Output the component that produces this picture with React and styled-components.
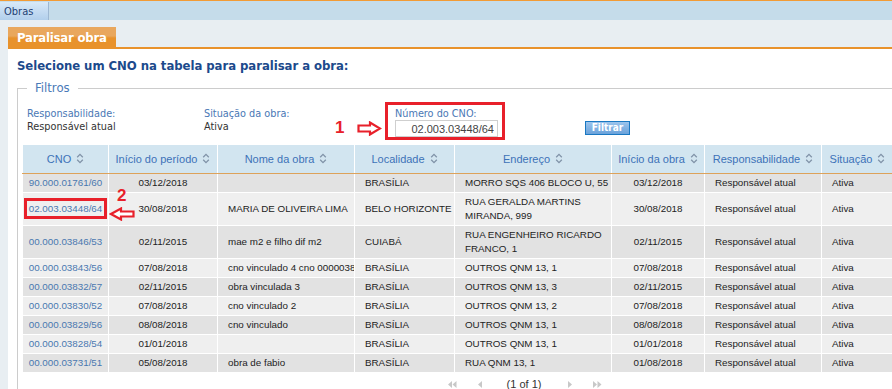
import React from "react";
import styled, { createGlobalStyle } from "styled-components";

const Global = createGlobalStyle`
  html, body { margin: 0; padding: 0; overflow: hidden; background: #e8eef2; }
  body { font-family: "Liberation Sans", Arial, sans-serif; }
`;

const Page = styled.div`
  width: 1060px;
  min-height: 389px;
  background: #e8eef2;
`;

const TopLine = styled.div`
  height: 1px;
  background: #f29b35;
`;

const MenuBar = styled.div`
  height: 19px;
  background: #c5dcea;
  display: flex;
  align-items: flex-end;
`;

const MenuTab = styled.div`
  height: 18px;
  width: 49px;
  box-sizing: border-box;
  padding: 0 0 0 4px;
  display: flex;
  align-items: center;
  background: linear-gradient(#d8e9f8, #b2cfec);
  border-right: 1px solid #9db7d2;
  color: #1f3f73;
  font: 11px "DejaVu Sans Condensed", Tahoma, sans-serif;
`;

const TabStrip = styled.div`
  padding: 7px 0 0 8px;
  display: flex;
`;

const TabTitle = styled.div`
  height: 20px;
  width: 108px;
  box-sizing: border-box;
  padding-left: 9px;
  display: flex;
  align-items: center;
  background: linear-gradient(#e9a75d 0%, #e9a75d 45%, #e8922c 55%, #e8922c 100%);
  color: #fff;
  font: bold 13px "DejaVu Sans Condensed", Tahoma, sans-serif;
  letter-spacing: -0.2px;
`;

const Content = styled.div`
  margin-left: 8px;
  background: #fff;
  border-top: 2px solid #e8922c;
  padding: 9px 0 0 9px;
  min-height: 340px;
`;

const Heading = styled.h1`
  margin: 0;
  font: bold 13px/16px "DejaVu Sans Condensed", Tahoma, sans-serif;
  color: #1c4a8c;
  letter-spacing: -0.05px;
`;

const Fieldset = styled.fieldset`
  margin: 6px 0 0 0;
  padding: 0 4px 0 4px;
  width: 1006px;
  border: 1px solid #cccccc;
  border-bottom: none;
`;

const Legend = styled.legend`
  margin-left: 5px;
  padding: 0 8px;
  color: #4a7ab8;
  font: 13px/16px "DejaVu Sans Condensed", Tahoma, sans-serif;
`;

const FilterRow = styled.div`
  display: flex;
  align-items: flex-start;
  padding: 6px 0 0 5px;
`;

const FilterGroup = styled.div`
  box-sizing: border-box;
  width: ${(p) => p.$w}px;
  padding-top: 5px;
  position: relative;
`;

const MarkedGroup = styled.div`
  box-sizing: border-box;
  width: 120px;
  border: 3px solid #e8202a;
  padding: 2px 4px 0 7px;
  position: relative;
`;

const FilterLabel = styled.div`
  font: 10.8px/13px "DejaVu Sans Condensed", Tahoma, sans-serif;
  color: #4a78b5;
`;

const FilterValue = styled.div`
  font: 10.8px/13px "DejaVu Sans Condensed", Tahoma, sans-serif;
  color: #333;
`;

const CnoInput = styled.input`
  display: block;
  box-sizing: border-box;
  width: 103px;
  height: 17px;
  margin: 0;
  padding: 0 3px;
  border: 1px solid #cfcfcf;
  text-align: right;
  color: #444;
  font: 11px "Liberation Sans", Arial, sans-serif;
`;

const FilterButton = styled.button`
  margin: 19px 0 0 80px;
  width: 45px;
  height: 14px;
  padding: 0;
  border: 1px solid #1a78c2;
  background: linear-gradient(#9cc4ec, #6aa2da);
  color: #fff;
  font: bold 10px/12px "DejaVu Sans Condensed", Tahoma, sans-serif;
`;

const Annot = styled.div`
  position: absolute;
  display: flex;
  align-items: center;
  color: #e8202a;
  font: bold 17px "Liberation Sans", Arial, sans-serif;
  ${(p) => p.$css}
`;

const Table = styled.table`
  margin-top: 5px;
  border-collapse: collapse;
  table-layout: fixed;
  width: 871px;
`;

const Th = styled.th`
  height: 28px;
  padding: 0 2px;
  background: #d2e5f0;
  border-left: 1px solid #fff;
  border-right: 1px solid #fff;
  border-bottom: 1px solid #dda25a;
  color: #3d72b8;
  font: normal 11px "Liberation Sans", Arial, sans-serif;
  white-space: nowrap;
  text-align: center;
`;

const SortIcon = () => (
  <svg width="8" height="11" viewBox="0 0 8 11" style={{ marginLeft: 5, verticalAlign: -1 }}>
    <path d="M1.2 4.2 L4 1.4 L6.8 4.2 M1.2 6.8 L4 9.6 L6.8 6.8" fill="none" stroke="#8193a8" strokeWidth="1.3" />
  </svg>
);

const Tr = styled.tr`
  background: ${(p) => (p.$odd ? "#e2e2e2" : "#efefef")};
`;

const Td = styled.td`
  padding: 2px 0 2px ${(p) => (p.$align === "left" ? 10 : 0)}px;
  border: 1px solid #fff;
  font: 9.8px/14px "Liberation Sans", Arial, sans-serif;
  color: ${(p) => (p.$link ? "#4a78b0" : "#222")};
  text-align: ${(p) => p.$align || "left"};
  white-space: ${(p) => (p.$clip ? "nowrap" : "normal")};
  overflow: ${(p) => (p.$clip ? "hidden" : "visible")};
  position: relative;
`;

const Marked = styled.span`
  outline: 3px solid #e8202a;
  outline-offset: 2px;
`;

const Pager = styled.div`
  width: 1006px;
  display: flex;
  justify-content: center;
  align-items: center;
  gap: 20px;
  height: 20px;
  margin-top: 1px;
`;

const PagerText = styled.span`
  margin: 0 6px 0 4px;
  font: 11px "Liberation Sans", Arial, sans-serif;
  color: #333;
`;

const ArrowRight = () => (
  <svg width="25" height="15" viewBox="0 0 25 15">
    <path d="M1.5 4.5 H13 V1.5 L23 7.5 L13 13.5 V10.5 H1.5 Z" fill="#fff" stroke="#e8202a" strokeWidth="2.2" strokeLinejoin="miter" />
  </svg>
);

const ArrowLeft = () => (
  <svg width="26" height="14" viewBox="0 0 26 14">
    <path d="M24.5 4.5 H12 V1.5 L2 7 L12 12.5 V9.5 H24.5 Z" fill="#fff" stroke="#e8202a" strokeWidth="2.2" />
  </svg>
);

const PagerIcon = ({ dir, dbl }) => {
  const tri = (x) =>
    dir === "l" ? `M${x + 4} 1 L${x} 4.5 L${x + 4} 8 Z` : `M${x} 1 L${x + 4} 4.5 L${x} 8 Z`;
  return (
    <svg width={dbl ? 9 : 6} height="9" viewBox={`0 0 ${dbl ? 9 : 6} 9`}>
      <path d={dbl ? tri(0) + " " + tri(4.5) : tri(1)} fill="#c8c8c8" />
    </svg>
  );
};

const cols = [86, 109, 137, 100, 157, 93, 117, 72];
const headers = [
  "CNO",
  "Início do período",
  "Nome da obra",
  "Localidade",
  "Endereço",
  "Início da obra",
  "Responsabilidade",
  "Situação",
];

const rows = [
  ["90.000.01761/60", "03/12/2018", "", "BRASÍLIA", "MORRO SQS 406 BLOCO U, 55", "03/12/2018"],
  ["02.003.03448/64", "30/08/2018", "MARIA DE OLIVEIRA LIMA", "BELO HORIZONTE", "RUA GERALDA MARTINS MIRANDA, 999", "30/08/2018"],
  ["00.000.03846/53", "02/11/2015", "mae m2 e filho dif m2", "CUIABÁ", "RUA ENGENHEIRO RICARDO FRANCO, 1", "02/11/2015"],
  ["00.000.03843/56", "07/08/2018", "cno vinculado 4 cno 00000384356", "BRASÍLIA", "OUTROS QNM 13, 1", "07/08/2018"],
  ["00.000.03832/57", "02/11/2015", "obra vinculada 3", "BRASÍLIA", "OUTROS QNM 13, 3", "02/11/2015"],
  ["00.000.03830/52", "07/08/2018", "cno vinculado 2", "BRASÍLIA", "OUTROS QNM 13, 2", "07/08/2018"],
  ["00.000.03829/56", "08/08/2018", "cno vinculado", "BRASÍLIA", "OUTROS QNM 13, 1", "08/08/2018"],
  ["00.000.03828/54", "01/01/2018", "", "BRASÍLIA", "OUTROS QNM 13, 1", "01/01/2018"],
  ["00.000.03731/51", "05/08/2018", "obra de fabio", "BRASÍLIA", "RUA QNM 13, 1", "01/08/2018"],
];

export default function App() {
  return (
    <Page>
      <Global />
      <TopLine />
      <MenuBar>
        <MenuTab>Obras</MenuTab>
      </MenuBar>
      <TabStrip>
        <TabTitle>Paralisar obra</TabTitle>
      </TabStrip>
      <Content>
        <Heading>Selecione um CNO na tabela para paralisar a obra:</Heading>
        <Fieldset>
          <Legend>Filtros</Legend>
          <FilterRow>
            <FilterGroup $w={177}>
              <FilterLabel>Responsabilidade:</FilterLabel>
              <FilterValue>Responsável atual</FilterValue>
            </FilterGroup>
            <FilterGroup $w={181}>
              <FilterLabel>Situação da obra:</FilterLabel>
              <FilterValue>Ativa</FilterValue>
            </FilterGroup>
            <MarkedGroup>
              <Annot $css="left: -53px; top: 13px; gap: 13px;">
                <span>1</span>
                <ArrowRight />
              </Annot>
              <FilterLabel>Número do CNO:</FilterLabel>
              <CnoInput defaultValue="02.003.03448/64" />
            </MarkedGroup>
            <FilterButton>Filtrar</FilterButton>
          </FilterRow>
          <Table>
            <colgroup>
              {cols.map((w, i) => (
                <col key={i} style={{ width: w }} />
              ))}
            </colgroup>
            <thead>
              <tr>
                {headers.map((h) => (
                  <Th key={h}>
                    {h}
                    <SortIcon />
                  </Th>
                ))}
              </tr>
            </thead>
            <tbody>
              {rows.map((r, i) => (
                <Tr key={r[0]} $odd={i % 2 === 0}>
                  <Td $link $align="center">
                    {i === 1 ? (
                      <>
                        <Marked>{r[0]}</Marked>
                        <Annot $css="left: 86px; top: -6px; flex-direction: column; align-items: flex-start; gap: 3px; line-height: 17px;">
                          <span style={{ marginLeft: 8 }}>2</span>
                          <ArrowLeft />
                        </Annot>
                      </>
                    ) : (
                      r[0]
                    )}
                  </Td>
                  <Td $align="center">{r[1]}</Td>
                  <Td $align="left" $clip>{r[2]}</Td>
                  <Td $align="left">{r[3]}</Td>
                  <Td $align="left">{r[4]}</Td>
                  <Td $align="center">{r[5]}</Td>
                  <Td $align="left">Responsável atual</Td>
                  <Td $align="left">Ativa</Td>
                </Tr>
              ))}
            </tbody>
          </Table>
          <Pager>
            <PagerIcon dir="l" dbl />
            <PagerIcon dir="l" />
            <PagerText>(1 of 1)</PagerText>
            <PagerIcon dir="r" />
            <PagerIcon dir="r" dbl />
          </Pager>
        </Fieldset>
      </Content>
    </Page>
  );
}
